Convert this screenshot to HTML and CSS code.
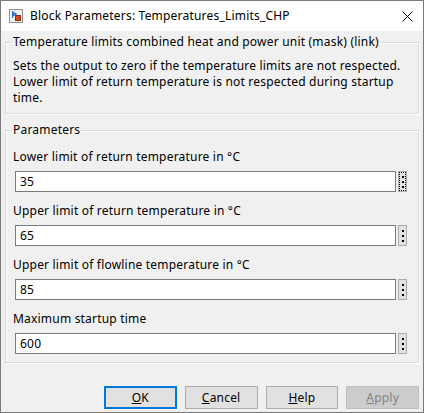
FILE: index.html
```html
<!DOCTYPE html>
<html>
<head>
<meta charset="utf-8">
<link rel="stylesheet" href="styles.css">
</head>
<body>
<div class="window">
  <div class="titlebar">
    <svg class="app-icon" viewBox="0 0 14 14" width="14" height="14">
      <rect x="0.5" y="0.5" width="13" height="13" fill="#f2f2f2" stroke="#8c8c8c"/>
      <path d="M3.5 2v7" stroke="#2a6ebd" stroke-width="1"/>
      <path d="M4 2.5 L8.5 5 L4 7.5Z" fill="#2f7fd6"/>
      <rect x="6.5" y="6.5" width="5" height="5" fill="#e5411d" stroke="#8a2a10"/>
    </svg>
    <span class="title">Block Parameters: Temperatures_Limits_CHP</span>
    <svg class="close" viewBox="0 0 11 11" width="11" height="11">
      <path d="M0.5 0.5L10.5 10.5M10.5 0.5L0.5 10.5" stroke="#000" stroke-width="1"/>
    </svg>
  </div>
  <div class="content">
    <fieldset class="group desc">
      <legend>Temperature limits combined heat and power unit (mask) (link)</legend>
      <p class="desc-text">Sets the output to zero if the temperature limits are not respected.<br>Lower limit of return temperature is not respected during startup<br>time.</p>
    </fieldset>
    <fieldset class="group params">
      <legend>Parameters</legend>
      <div class="param">
        <div class="label">Lower limit of return temperature in °C</div>
        <div class="row">
          <div class="field">35</div>
          <div class="more focused"><span class="dot"></span><span class="dot"></span><span class="dot"></span></div>
        </div>
      </div>
      <div class="param">
        <div class="label">Upper limit of return temperature in °C</div>
        <div class="row">
          <div class="field">65</div>
          <div class="more"><span class="dot"></span><span class="dot"></span><span class="dot"></span></div>
        </div>
      </div>
      <div class="param">
        <div class="label">Upper limit of flowline temperature in °C</div>
        <div class="row">
          <div class="field">85</div>
          <div class="more"><span class="dot"></span><span class="dot"></span><span class="dot"></span></div>
        </div>
      </div>
      <div class="param">
        <div class="label">Maximum startup time</div>
        <div class="row">
          <div class="field">600</div>
          <div class="more"><span class="dot"></span><span class="dot"></span><span class="dot"></span></div>
        </div>
      </div>
    </fieldset>
    <div class="buttons">
      <div class="btn default"><u>O</u>K</div>
      <div class="btn"><u>C</u>ancel</div>
      <div class="btn"><u>H</u>elp</div>
      <div class="btn disabled"><u>A</u>pply</div>
    </div>
  </div>
</div>
</body>
</html>
```

FILE: styles.css
```css
body {
  margin: 0;
  font-family: "Segoe UI", "Noto Sans", sans-serif;
  font-size: 12px;
  letter-spacing: 0.2px;
  color: #000;
  background: #fff;
}
.window {
  width: 424px;
  height: 413px;
  box-sizing: border-box;
  border: 1px solid #7a7a7a;
  background: #f0f0f0;
  display: flex;
  flex-direction: column;
}
.titlebar {
  height: 30px;
  flex: none;
  background: #fff;
  display: flex;
  align-items: center;
  padding: 0 10px 0 8px;
}
.app-icon {
  margin-right: 7px;
  flex: none;
}
.title {
  flex: 1;
  line-height: 16px;
  white-space: nowrap;
}
.close {
  flex: none;
}
.content {
  flex: 1;
  padding: 3px 4px 3px 4px;
  display: flex;
  flex-direction: column;
}
.group {
  margin: 0;
  border: 1px solid #d9d9d9;
  box-shadow: inset 1px 1px 0 #fff, 1px 1px 0 #fff;
  min-width: 0;
}
.group legend {
  padding: 0 1px;
  line-height: 16px;
  white-space: nowrap;
}
.desc {
  padding: 8px 6px 7px 6px;
}
.desc-text {
  margin: 0 0 0 1px;
  line-height: 16px;
  white-space: nowrap;
}
.params {
  margin-top: 8px;
  padding: 11px 6px 8px 6px;
}
.param + .param {
  margin-top: 11px;
}
.label {
  margin-left: 1px;
  line-height: 16px;
  white-space: nowrap;
}
.row {
  display: flex;
  gap: 2px;
  margin-top: 6px;
  margin-left: 3px;
}
.field {
  width: 381px;
  height: 21px;
  box-sizing: border-box;
  border: 1px solid #7a7a7a;
  background: #fff;
  padding-left: 4px;
  line-height: 19px;
}
.more {
  width: 9px;
  height: 21px;
  box-sizing: border-box;
  border: 1px solid #adadad;
  background: #e1e1e1;
  display: flex;
  flex-direction: column;
  align-items: center;
  justify-content: center;
  gap: 3px;
}
.more.focused {
  outline: 1px dotted #000;
  outline-offset: -2px;
}
.dot {
  width: 2px;
  height: 2px;
  background: #000;
}
.buttons {
  display: flex;
  gap: 8px;
  margin-top: 23px;
  padding-left: 99px;
}
.btn {
  width: 73px;
  height: 23px;
  box-sizing: border-box;
  border: 1px solid #adadad;
  background: #e1e1e1;
  display: flex;
  align-items: center;
  justify-content: center;
  line-height: 16px;
}
.btn.default {
  border: 2px solid #0078d7;
}
.btn.disabled {
  background: #cccccc;
  border-color: #bfbfbf;
  color: #838383;
}
```
